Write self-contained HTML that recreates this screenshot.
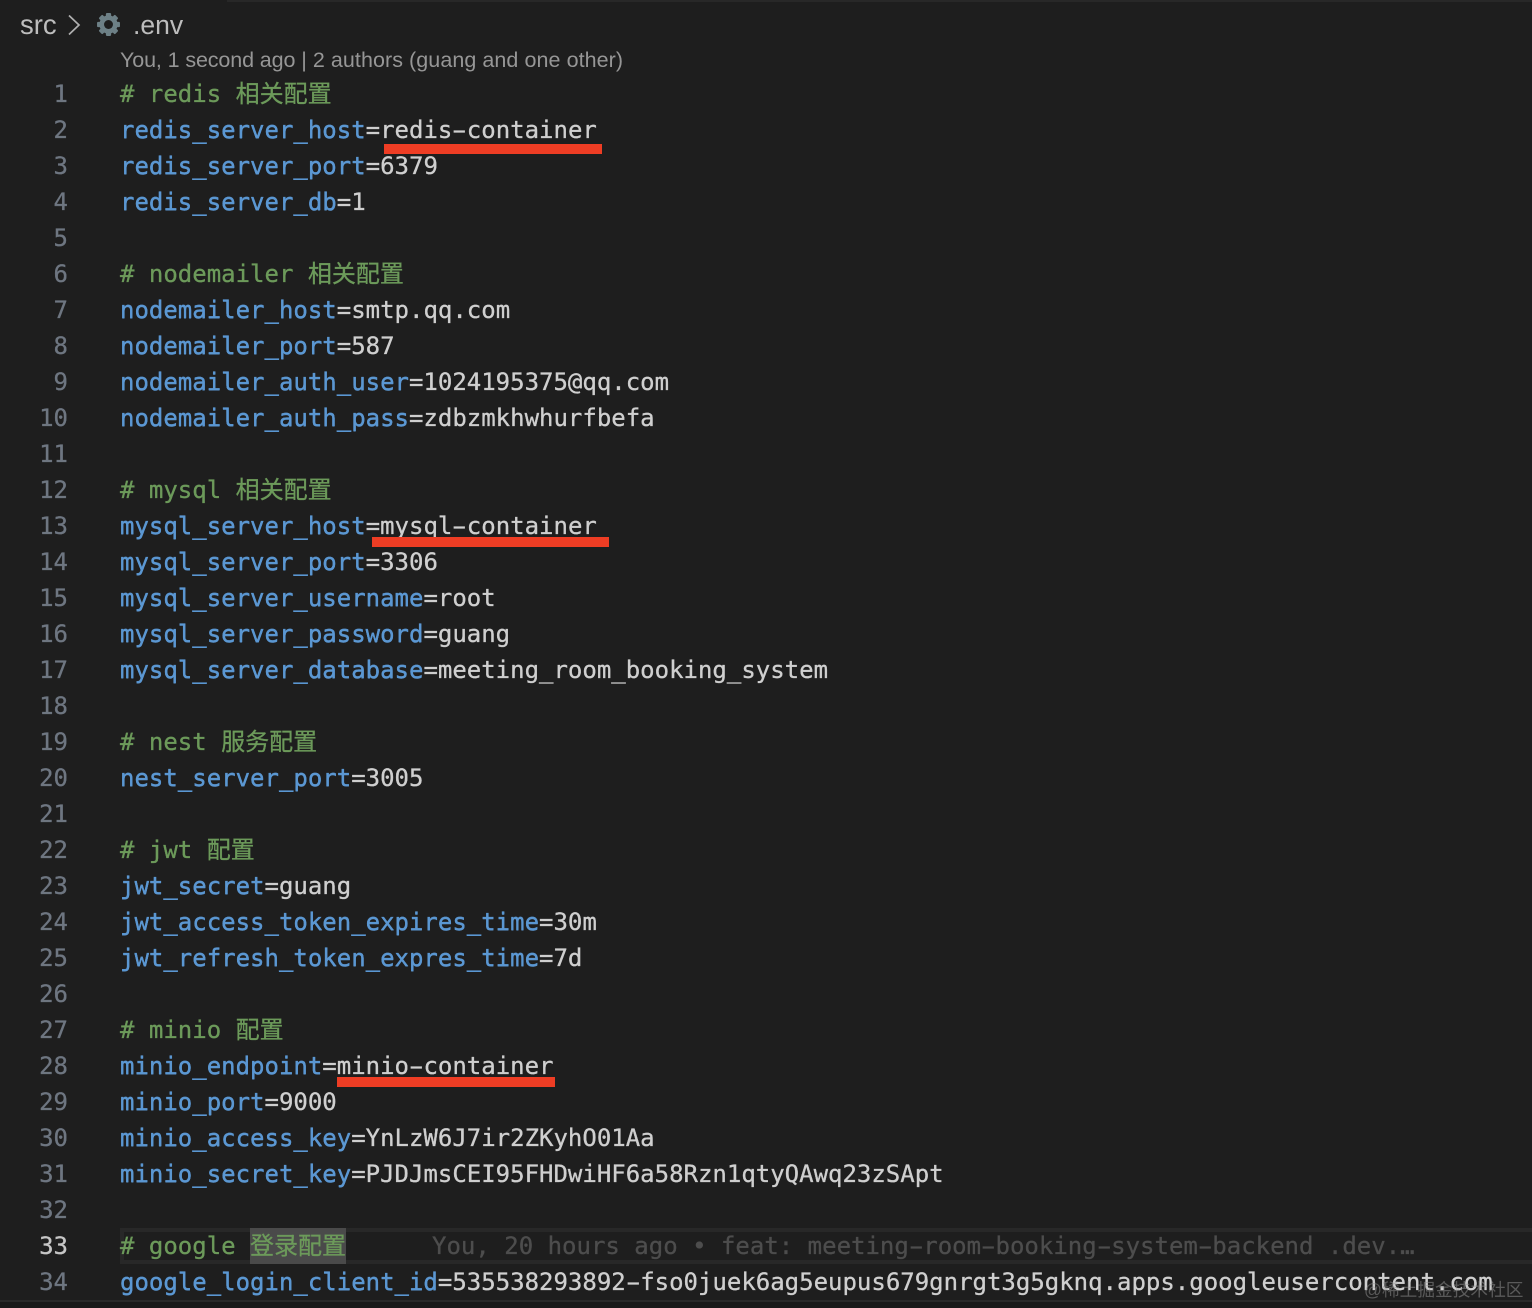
<!DOCTYPE html>
<html lang="zh">
<head>
<meta charset="utf-8">
<title>.env</title>
<style>
html,body{margin:0;padding:0;background:#1e1e1e;}
body{width:1532px;height:1308px;position:relative;overflow:hidden;}
.l,.n{position:absolute;height:36px;line-height:36px;font-family:"DejaVu Sans Mono","Noto Sans CJK SC",monospace;font-size:24px;white-space:pre;-webkit-text-stroke:.3px currentColor;}
.l{left:120px;color:#cfcfcf;}
.k{text-shadow:0 .5px 0 currentColor;}
.n{left:0;width:68px;text-align:right;color:#6e7681;}
.k{color:#5b97d2;}
.c{color:#6c9a5a;margin-top:-2px;}
.h{display:inline-block;transform:scaleX(1.75);}
.z{font-family:"Noto Sans CJK SC",sans-serif;display:inline-block;width:24px;text-align:center;}
.r{position:absolute;background:#ee3d24;}
.s{font-family:"Liberation Sans",sans-serif;position:absolute;white-space:pre;}
</style>
</head>
<body>
<div style="position:absolute;left:227px;top:0;width:1305px;height:2px;background:#282828"></div>

<div class="s" style="left:20px;top:10px;font-size:27.500px;line-height:30px;color:#bdbdbd">src</div>
<svg style="position:absolute;left:66px;top:13px" width="16" height="24" viewBox="0 0 16 24"><path d="M3 2.500 L13 12 L3 21.500" fill="none" stroke="#b0b0b0" stroke-width="1.700"/></svg>
<svg style="position:absolute;left:96px;top:11.500px" width="25" height="25" viewBox="0 0 24 24"><g fill="#6d8086"><rect x="9.500" y="1" width="5" height="22" rx="1"/><rect x="9.500" y="1" width="5" height="22" rx="1" transform="rotate(45 12 12)"/><rect x="9.500" y="1" width="5" height="22" rx="1" transform="rotate(90 12 12)"/><rect x="9.500" y="1" width="5" height="22" rx="1" transform="rotate(135 12 12)"/></g><circle cx="12" cy="12" r="6.500" fill="none" stroke="#6d8086" stroke-width="4.500"/><circle cx="12" cy="12" r="4.300" fill="#1e1e1e"/></svg>
<div class="s" style="left:133px;top:10px;font-size:26.500px;line-height:30px;color:#bdbdbd">.env</div>
<div class="s" style="left:120px;top:46px;font-size:21.500px;line-height:28px;color:#969696"><span style="letter-spacing:-.12px">You, 1 second ago</span> | <span style="letter-spacing:.06px">2 authors (guang and one other)</span></div>

<div style="position:absolute;left:120px;top:1228px;width:1412px;height:36px;box-sizing:border-box;border:4px solid #282828;border-right:0"></div>
<div style="position:absolute;left:250px;top:1228px;width:96px;height:36px;background:#4a4a4a"></div>

<div class="n" style="top:76px">1</div><div class="l c" style="top:76px"># redis <span class="z">相</span><span class="z">关</span><span class="z">配</span><span class="z">置</span></div>
<div class="n" style="top:112px">2</div><div class="l" style="top:112px"><span class="k">redis_server_host</span>=redis<span class="h">-</span>container</div>
<div class="n" style="top:148px">3</div><div class="l" style="top:148px"><span class="k">redis_server_port</span>=6379</div>
<div class="n" style="top:184px">4</div><div class="l" style="top:184px"><span class="k">redis_server_db</span>=1</div>
<div class="n" style="top:220px">5</div>
<div class="n" style="top:256px">6</div><div class="l c" style="top:256px"># nodemailer <span class="z">相</span><span class="z">关</span><span class="z">配</span><span class="z">置</span></div>
<div class="n" style="top:292px">7</div><div class="l" style="top:292px"><span class="k">nodemailer_host</span>=smtp.qq.com</div>
<div class="n" style="top:328px">8</div><div class="l" style="top:328px"><span class="k">nodemailer_port</span>=587</div>
<div class="n" style="top:364px">9</div><div class="l" style="top:364px"><span class="k">nodemailer_auth_user</span>=1024195375@qq.com</div>
<div class="n" style="top:400px">10</div><div class="l" style="top:400px"><span class="k">nodemailer_auth_pass</span>=zdbzmkhwhurfbefa</div>
<div class="n" style="top:436px">11</div>
<div class="n" style="top:472px">12</div><div class="l c" style="top:472px"># mysql <span class="z">相</span><span class="z">关</span><span class="z">配</span><span class="z">置</span></div>
<div class="n" style="top:508px">13</div><div class="l" style="top:508px"><span class="k">mysql_server_host</span>=mysql<span class="h">-</span>container</div>
<div class="n" style="top:544px">14</div><div class="l" style="top:544px"><span class="k">mysql_server_port</span>=3306</div>
<div class="n" style="top:580px">15</div><div class="l" style="top:580px"><span class="k">mysql_server_username</span>=root</div>
<div class="n" style="top:616px">16</div><div class="l" style="top:616px"><span class="k">mysql_server_password</span>=guang</div>
<div class="n" style="top:652px">17</div><div class="l" style="top:652px"><span class="k">mysql_server_database</span>=meeting_room_booking_system</div>
<div class="n" style="top:688px">18</div>
<div class="n" style="top:724px">19</div><div class="l c" style="top:724px"># nest <span class="z">服</span><span class="z">务</span><span class="z">配</span><span class="z">置</span></div>
<div class="n" style="top:760px">20</div><div class="l" style="top:760px"><span class="k">nest_server_port</span>=3005</div>
<div class="n" style="top:796px">21</div>
<div class="n" style="top:832px">22</div><div class="l c" style="top:832px"># jwt <span class="z">配</span><span class="z">置</span></div>
<div class="n" style="top:868px">23</div><div class="l" style="top:868px"><span class="k">jwt_secret</span>=guang</div>
<div class="n" style="top:904px">24</div><div class="l" style="top:904px"><span class="k">jwt_access_token_expires_time</span>=30m</div>
<div class="n" style="top:940px">25</div><div class="l" style="top:940px"><span class="k">jwt_refresh_token_expres_time</span>=7d</div>
<div class="n" style="top:976px">26</div>
<div class="n" style="top:1012px">27</div><div class="l c" style="top:1012px"># minio <span class="z">配</span><span class="z">置</span></div>
<div class="n" style="top:1048px">28</div><div class="l" style="top:1048px"><span class="k">minio_endpoint</span>=minio<span class="h">-</span>container</div>
<div class="n" style="top:1084px">29</div><div class="l" style="top:1084px"><span class="k">minio_port</span>=9000</div>
<div class="n" style="top:1120px">30</div><div class="l" style="top:1120px"><span class="k">minio_access_key</span>=YnLzW6J7ir2ZKyhO01Aa</div>
<div class="n" style="top:1156px">31</div><div class="l" style="top:1156px"><span class="k">minio_secret_key</span>=PJDJmsCEI95FHDwiHF6a58Rzn1qtyQAwq23zSApt</div>
<div class="n" style="top:1192px">32</div>
<div class="n" style="top:1228px;color:#c6c6c6">33</div><div class="l c" style="top:1228px"># google <span class="z">登</span><span class="z">录</span><span class="z">配</span><span class="z">置</span></div>
<div class="l" style="top:1228px;left:432px;color:#4d4d4d">You, 20 hours ago • feat: meeting<span class="h">-</span>room<span class="h">-</span>booking<span class="h">-</span>system<span class="h">-</span>backend .dev.…</div>
<div class="n" style="top:1264px">34</div><div class="l" style="top:1264px"><span class="k">google_login_client_id</span>=535538293892<span class="h">-</span>fso0juek6ag5eupus679gnrgt3g5gknq.apps.googleusercontent.com</div>

<div class="r" style="left:384px;top:144px;width:218px;height:10px"></div>
<div class="r" style="left:372px;top:537px;width:237px;height:10px"></div>
<div class="r" style="left:337px;top:1077px;width:218px;height:10px"></div>

<div style="position:absolute;left:0;top:1300px;width:1532px;height:2px;background:#2a2a2a"></div>
<div style="position:absolute;left:0;top:1302px;width:1532px;height:6px;background:#1a1a1a"></div>
<div class="s" style="left:1364px;top:1279px;font-family:'Liberation Sans','Noto Sans CJK SC',sans-serif;font-size:17.700px;line-height:22px;color:rgba(150,150,150,.5)">@稀土掘金技术社区</div>
</body>
</html>
